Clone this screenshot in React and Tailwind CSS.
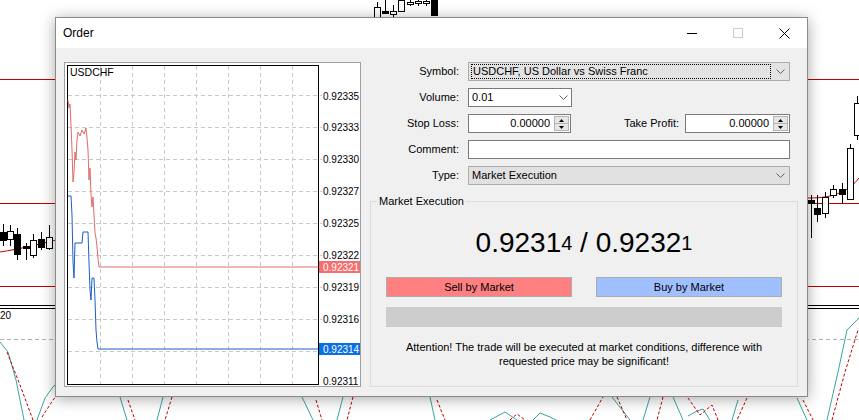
const teal = [
  '0,342 8,352 16,380 24,420',
  '37,420 45,398 53,387 60,380',
  '120,397 127,420',
  '163,397 157,420',
  '302,397 313,420',
  '343,397 337,420',
  '430,397 435,420',
  '490,420 505,412 517,420',
  '533,420 540,413 550,417 556,420',
  '612,397 630,420',
  '650,397 643,420',
  '673,397 683,420',
  '688,416 697,411 703,409 710,420',
  '738,400 732,420',
  '797,398 807,420',
  '827,420 838,372 847,330 859,318',
]
const redDash = [
  '7,352 20,385 33,420',
  '42,417 53,400 60,392',
  '128,400 135,420',
  '172,397 165,420',
  '316,400 322,420',
  '353,397 347,420',
  '437,400 445,420',
  '510,420 517,414 525,420',
  '590,420 603,397',
  '617,397 627,420',
  '663,397 657,420',
  '688,398 700,415 712,405 718,420',
  '747,398 737,420',
  '803,400 813,420',
  '832,420 845,372 858,330',
]

// x, top of wick, bottom of wick, body top, body bottom, filled
const candles = [
  [3, 224, 246, 232, 240, true],
  [10, 225, 246, 231, 239, false],
  [17, 228, 260, 234, 254, true],
  [26, 243, 260, 246, 248, true],
  [33, 234, 258, 240, 255, false],
  [41, 232, 250, 239, 247, true],
  [49, 225, 250, 237, 248, false],
  [377, 2, 18, 7, 17, false],
  [385, 0, 14, 11, 13, true],
  [393, 5, 17, 11, 14, false],
  [401, 0, 12, 0, 11, false],
  [410, 0, 6, 2, 4, false],
  [418, 0, 6, 1, 3, false],
  [426, 0, 6, 1, 3, false],
  [434, 0, 15, 0, 15, true],
  [811, 195, 238, 200, 203, true],
  [817, 195, 222, 208, 214, true],
  [825, 192, 218, 197, 213, false],
  [833, 185, 198, 189, 195, false],
  [842, 183, 203, 189, 194, true],
  [850, 144, 200, 148, 199, false],
  [857, 96, 140, 103, 135, false],
]

function Background() {
  return (
    <svg className="absolute inset-0" width="859" height="420" viewBox="0 0 859 420">
      <line x1="0" y1="79.5" x2="859" y2="79.5" stroke="#c00000" />
      <line x1="0" y1="203.5" x2="859" y2="203.5" stroke="#c00000" />
      <line x1="0" y1="286.5" x2="859" y2="286.5" stroke="#c00000" />
      <line x1="0" y1="305.5" x2="859" y2="305.5" stroke="#000" />
      <line x1="0" y1="308.5" x2="859" y2="308.5" stroke="#000" />
      <line x1="0" y1="339.5" x2="859" y2="339.5" stroke="#b0b0b0" strokeDasharray="4,3" />
      <path d="M0 252 C 20 249, 40 244, 56 240" fill="none" stroke="#c00000" />
      <path d="M808 198 C 825 198, 845 196, 859 178" fill="none" stroke="#c00000" />
      {candles.map(([x, w1, w2, b1, b2, filled], i) => (
        <g key={i}>
          <line x1={x + 0.5} y1={w1} x2={x + 0.5} y2={w2} stroke="#000" />
          <rect x={x - 2.5} y={b1 + 0.5} width="6" height={Math.max(b2 - b1, 1)} fill={filled ? '#000' : '#fff'} stroke="#000" />
        </g>
      ))}
      <text x="0" y="319" fontSize="10" fontFamily="Liberation Sans, Arial, sans-serif" fill="#000">20</text>
      {teal.map((p, i) => (
        <polyline key={'t' + i} points={p} fill="none" stroke="#3aa6a0" />
      ))}
      {redDash.map((p, i) => (
        <polyline key={'r' + i} points={p} fill="none" stroke="#c00000" strokeDasharray="3,2" />
      ))}
    </svg>
  )
}

const gridY = [95.5, 127.5, 159.5, 191.5, 223.5, 255.5, 287.5, 319.5, 351.5]
const gridX = [100.5, 132.5, 164.5, 196.5, 228.5, 260.5, 292.5]
const axis = [
  ['0.92335', 96],
  ['0.92333', 127],
  ['0.92330', 159],
  ['0.92327', 191],
  ['0.92325', 223],
  ['0.92322', 255],
  ['0.92319', 287],
  ['0.92316', 319],
  ['0.92311', 381],
]
const ask = '68,100 69,108 70,104 71,125 72,150 73,182 74,172 75,152 76,160 77,140 78,132 80,136 82,130 84,134 86,128 87,138 88,150 89,180 90,168 91,195 92,207 93,197 94,215 95,233 96,238 97,247 98,258 99,267 318,267'
const bid = '68,196 71,196 72,215 73,262 74,278 75,243 82,243 83,232 88,232 89,262 90,290 91,300 92,278 94,278 95,300 96,330 97,342 98,349 318,349'

function TickChart() {
  return (
    <div className="w-[297px] h-[325px] border border-[#a0a0a0] bg-white shrink-0">
      <svg width="295" height="323" viewBox="65 63 295 323" className="block">
        {gridY.map((y) => (
          <line key={y} x1="68" y1={y} x2="322" y2={y} stroke="#c8c8c8" strokeDasharray="4,3" />
        ))}
        {gridX.map((x) => (
          <line key={x} x1={x} y1="66" x2={x} y2="384" stroke="#c8c8c8" strokeDasharray="4,3" />
        ))}
        <rect x="67.5" y="65.5" width="251" height="319" fill="none" stroke="#000" />
        <polyline points={ask} fill="none" stroke="#e06b6b" />
        <polyline points={bid} fill="none" stroke="#1c5fc4" />
        <text x="70" y="76" fontSize="10.5" fontFamily="Liberation Sans, Arial, sans-serif" fill="#000">USDCHF</text>
        {axis.map(([t, y]) => (
          <text key={t} x="323" y={y + 3.5} fontSize="10" fontFamily="Liberation Sans, Arial, sans-serif" fill="#000">{t}</text>
        ))}
        <rect x="319" y="261" width="41" height="12" fill="#f76e6e" />
        <text x="323" y="270.5" fontSize="10" fontFamily="Liberation Sans, Arial, sans-serif" fill="#fff">0.92321</text>
        <rect x="319" y="343" width="41" height="12" fill="#0b6fe4" />
        <text x="323" y="352.5" fontSize="10" fontFamily="Liberation Sans, Arial, sans-serif" fill="#fff">0.92314</text>
      </svg>
    </div>
  )
}

function Chevron() {
  return (
    <svg width="9" height="5" viewBox="0 0 9 5">
      <path d="M0.5 0.5 L4.5 4.5 L8.5 0.5" fill="none" stroke="#606060" />
    </svg>
  )
}

function Spinner() {
  return (
    <div className="flex flex-col w-[15px] h-[15px] border border-[#b4b4b4] bg-[#e6e6e6] mr-[1px]">
      <div className="flex-1 flex items-center justify-center border-b border-[#b4b4b4]">
        <svg width="5" height="3" viewBox="0 0 5 3"><path d="M2.5 0 L5 3 L0 3 Z" fill="#000" /></svg>
      </div>
      <div className="flex-1 flex items-center justify-center">
        <svg width="5" height="3" viewBox="0 0 5 3"><path d="M0 0 L5 0 L2.5 3 Z" fill="#000" /></svg>
      </div>
    </div>
  )
}

function Row({ label, children }) {
  return (
    <div className="flex items-center h-[19px]">
      <span className="w-[89px] text-right shrink-0">{label}</span>
      <div className="ml-[9px] flex-1 flex items-center h-full pr-[8px]">{children}</div>
    </div>
  )
}

function OrderForm() {
  return (
    <div className="w-[428px] ml-[9px] h-[325px] flex flex-col">
      <div className="flex flex-col gap-[7px]">
        <Row label="Symbol:">
          <div className="flex-1 h-full flex items-center border border-[#adadad] bg-[#e3e3e3]">
            <div className="flex-1 h-[15px] ml-[2px] border border-dotted border-[#000] flex items-center pl-[1px]">USDCHF, US Dollar vs Swiss Franc</div>
            <div className="w-[18px] flex justify-center"><Chevron /></div>
          </div>
        </Row>
        <Row label="Volume:">
          <div className="w-[104px] h-full flex items-center justify-between border border-[#7a7a7a] bg-white pl-[3px] pr-[3px]">
            <span>0.01</span>
            <Chevron />
          </div>
        </Row>
        <Row label="Stop Loss:">
          <div className="w-[103px] h-full flex items-center justify-end border border-[#7a7a7a] bg-white">
            <span className="pr-[4px]">0.00000</span>
            <Spinner />
          </div>
          <span className="flex-1 text-right pr-[6px]">Take Profit:</span>
          <div className="w-[105px] h-full flex items-center justify-end border border-[#7a7a7a] bg-white">
            <span className="pr-[4px]">0.00000</span>
            <Spinner />
          </div>
        </Row>
        <Row label="Comment:">
          <div className="flex-1 h-full border border-[#7a7a7a] bg-white" />
        </Row>
        <Row label="Type:">
          <div className="flex-1 h-full flex items-center border border-[#adadad] bg-[#e1e1e1] pl-[3px]">
            <span className="flex-1">Market Execution</span>
            <div className="w-[18px] flex justify-center"><Chevron /></div>
          </div>
        </Row>
      </div>
      <fieldset className="flex-1 mt-[10px] border border-[#dcdcdc] min-h-0">
        <legend className="ml-[6px] px-[2px] leading-[13px]">Market Execution</legend>
        <div className="flex flex-col px-[15px]">
          <div className="mt-[19px] h-[32px] flex items-center justify-center text-[28px] leading-[32px]">
            <span>0.9231</span><span className="text-[20px]">4</span>
            <span>&nbsp;/&nbsp;</span>
            <span>0.9232</span><span className="text-[20px]">1</span>
          </div>
          <div className="mt-[18px] flex gap-[24px]">
            <button className="flex-1 h-[20px] bg-[#ff8080] border border-[#adadad] text-[11px]">Sell by Market</button>
            <button className="flex-1 h-[20px] bg-[#a0bfff] border border-[#adadad] text-[11px]">Buy by Market</button>
          </div>
          <div className="mt-[10px] h-[20px] bg-[#cccccc]" />
          <p className="mt-[13px] text-center leading-[14px]">
            Attention! The trade will be executed at market conditions, difference with
            <br />
            requested price may be significant!
          </p>
        </div>
      </fieldset>
    </div>
  )
}

function TitleBar() {
  return (
    <div className="h-[30px] bg-white flex items-center">
      <span className="pl-[7px] flex-1 text-[12px]">Order</span>
      <div className="w-[46px] h-full flex items-center justify-center">
        <svg width="10" height="1" viewBox="0 0 10 1"><rect width="10" height="1" fill="#000" /></svg>
      </div>
      <div className="w-[46px] h-full flex items-center justify-center">
        <svg width="10" height="10" viewBox="0 0 10 10"><rect x="0.5" y="0.5" width="9" height="9" fill="none" stroke="#cccccc" /></svg>
      </div>
      <div className="w-[46px] h-full flex items-center justify-center">
        <svg width="11" height="11" viewBox="0 0 11 11"><path d="M0.5 0.5 L10.5 10.5 M10.5 0.5 L0.5 10.5" stroke="#000" strokeWidth="1" /></svg>
      </div>
    </div>
  )
}

export default function App() {
  return (
    <div className="relative w-[859px] h-[420px] overflow-hidden bg-white font-['Liberation_Sans',Arial,sans-serif] text-[11px] text-black">
      <Background />
      <div className="absolute left-[55px] top-[17px] w-[753px] h-[380px] border border-[#8a8a8a] bg-[#f0f0f0] shadow-[0_2px_14px_rgba(0,0,0,0.35)] flex flex-col">
        <TitleBar />
        <div className="flex pl-[8px] pt-[14px]">
          <TickChart />
          <OrderForm />
        </div>
      </div>
    </div>
  )
}
